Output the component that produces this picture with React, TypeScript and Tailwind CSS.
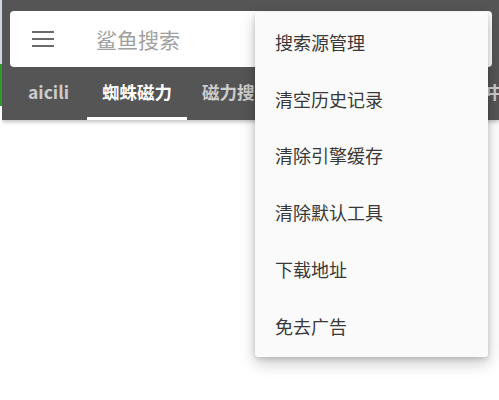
export default function App() {
  const menuItems = ["搜索源管理", "清空历史记录", "清除引擎缓存", "清除默认工具", "下载地址", "免去广告"];

  return (
    <div
      className="relative w-[499px] h-[400px] overflow-hidden bg-white"
      style={{ fontFamily: '"Noto Sans CJK SC", "Noto Sans", sans-serif' }}
    >
      {/* strip of whatever sits behind the app */}
      <div className="absolute left-0 top-0 w-[2px] h-[400px] flex flex-col">
        <div className="h-[64px] bg-[#cfd6de]" />
        <div className="h-[42px] bg-[#2e9a2e]" />
        <div className="flex-1 bg-white" />
      </div>

      <div className="ml-[2px] bg-[#555555] shadow-[0_2px_4px_rgba(0,0,0,0.25)]">
        <div className="pt-[11px] pl-[8px] pr-[7px]">
          <div className="h-[56px] bg-white rounded-[4px] flex items-center">
            <div className="ml-[22px] w-[22px] flex flex-col gap-[5px]">
              <div className="h-[2px] bg-[#6b6b6b]" />
              <div className="h-[2px] bg-[#6b6b6b]" />
              <div className="h-[2px] bg-[#6b6b6b]" />
            </div>
            <span className="ml-[42px] text-[21px] text-[#a0a0a0] leading-none">鲨鱼搜索</span>
          </div>
        </div>
        <div className="h-[53px] flex overflow-hidden pl-[8px] text-[17.5px] font-bold whitespace-nowrap">
          <div className="w-[77px] shrink-0 flex items-center justify-center text-[#cccccc] pb-[2px]">aicili</div>
          <div className="w-[100px] shrink-0 flex flex-col">
            <div className="flex-1 flex items-center justify-center text-white pt-[1px]">蜘蛛磁力</div>
            <div className="h-[3px] bg-white" />
          </div>
          <div className="w-[100px] shrink-0 flex items-center justify-center text-[#cccccc] pb-[2px]">磁力搜索</div>
          <div className="w-[181px] shrink-0 flex items-center justify-center text-[#cccccc] pb-[2px]">磁力熊猫</div>
          <div className="shrink-0 flex items-center pl-[18px] text-[#cccccc] pb-[2px]">中子</div>
        </div>
      </div>

      <div className="absolute left-[255px] top-[12px] w-[233px] h-[345px] bg-[#fafafa] rounded-[3px] shadow-[0_6px_16px_rgba(0,0,0,0.22),0_2px_5px_rgba(0,0,0,0.15)] flex flex-col pt-[2px]">
        {menuItems.map((item) => (
          <div key={item} className="h-[56.8px] shrink-0 flex items-center pl-[20px] text-[18px] text-[#383838]">
            {item}
          </div>
        ))}
      </div>
    </div>
  );
}
